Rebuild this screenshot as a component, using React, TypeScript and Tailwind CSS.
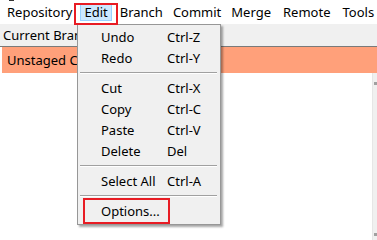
import React from 'react';

const menus = ['Repository', 'Edit', 'Branch', 'Commit', 'Merge', 'Remote', 'Tools'];

type Item = { label: string; key?: string } | 'sep';

const editItems: Item[] = [
  { label: 'Undo', key: 'Ctrl-Z' },
  { label: 'Redo', key: 'Ctrl-Y' },
  'sep',
  { label: 'Cut', key: 'Ctrl-X' },
  { label: 'Copy', key: 'Ctrl-C' },
  { label: 'Paste', key: 'Ctrl-V' },
  { label: 'Delete', key: 'Del' },
  'sep',
  { label: 'Select All', key: 'Ctrl-A' },
  'sep',
  { label: 'Options...' },
];

export default function App() {
  return (
    <div
      className="relative w-[377px] h-[240px] overflow-hidden bg-white text-[13px] text-black flex flex-col"
      style={{ fontFamily: '"Noto Sans", "Open Sans", sans-serif' }}
    >
      {/* bit of the window above */}
      <div className="absolute left-[9px] top-0 w-[5px] h-[1px] bg-[#333]" />

      {/* menu bar */}
      <div className="flex items-center h-[24px] pl-[2px] leading-none shrink-0">
        {menus.map((m) => (
          <div
            key={m}
            className={`h-[18px] flex items-center whitespace-nowrap ${
              m === 'Edit'
                ? 'bg-[#cce8ff] border border-[#99d1ff] px-[3px] ml-[3px] mr-[3px]'
                : m === 'Merge' || m === 'Remote'
                  ? 'pl-[5px] pr-[7px]'
                  : 'px-[5px]'
            }`}
          >
            {m}
          </div>
        ))}
      </div>

      {/* toolbar row */}
      <div className="h-[23px] shrink-0 bg-[#f0f0f0] border-b border-[#7a7a7a] flex items-center pl-[3px] leading-none">
        Current Branch
      </div>

      {/* content */}
      <div className="flex-1 flex flex-col pl-[2px]">
        <div className="h-[26px] shrink-0 bg-[#ffa07a] flex items-center pl-[5px] leading-none">
          Unstaged Changes
        </div>
        <div className="flex-1 flex">
          <div className="flex-1 bg-white" />
          <div className="w-[5px] bg-[#f0f0f0] border-l border-[#e6e6e6] flex flex-col justify-between items-end pt-[9px] pb-[4px]">
            <div className="w-[3px] h-[3px] bg-[#a0a0a0]" />
            <div className="w-[3px] h-[3px] bg-[#a0a0a0]" />
          </div>
        </div>
      </div>

      {/* dropdown */}
      <div className="absolute left-[77px] top-[24px] w-[144px] bg-[#f0f0f0] border border-[#979797] py-[2px] shadow-[2px_2px_2px_rgba(0,0,0,0.35)] leading-none">
        {editItems.map((it, i) =>
          it === 'sep' ? (
            <div key={i} className="h-[9px] pt-[3px] pl-[2px] pr-[3px]">
              <div className="h-[1px] bg-[#a0a0a0]" />
              <div className="h-[1px] bg-white" />
            </div>
          ) : (
            <div key={i} className="h-[21px] flex items-center pl-[23px]">
              <span className="w-[66px] whitespace-nowrap">{it.label}</span>
              {it.key && <span>{it.key}</span>}
            </div>
          )
        )}
      </div>

      {/* red annotation boxes */}
      <div className="absolute left-[74px] top-[3px] w-[44px] h-[22px] border-2 border-[#e81c24]" />
      <div className="absolute left-[83px] top-[198px] w-[87px] h-[26px] border-2 border-[#e81c24]" />
    </div>
  );
}
